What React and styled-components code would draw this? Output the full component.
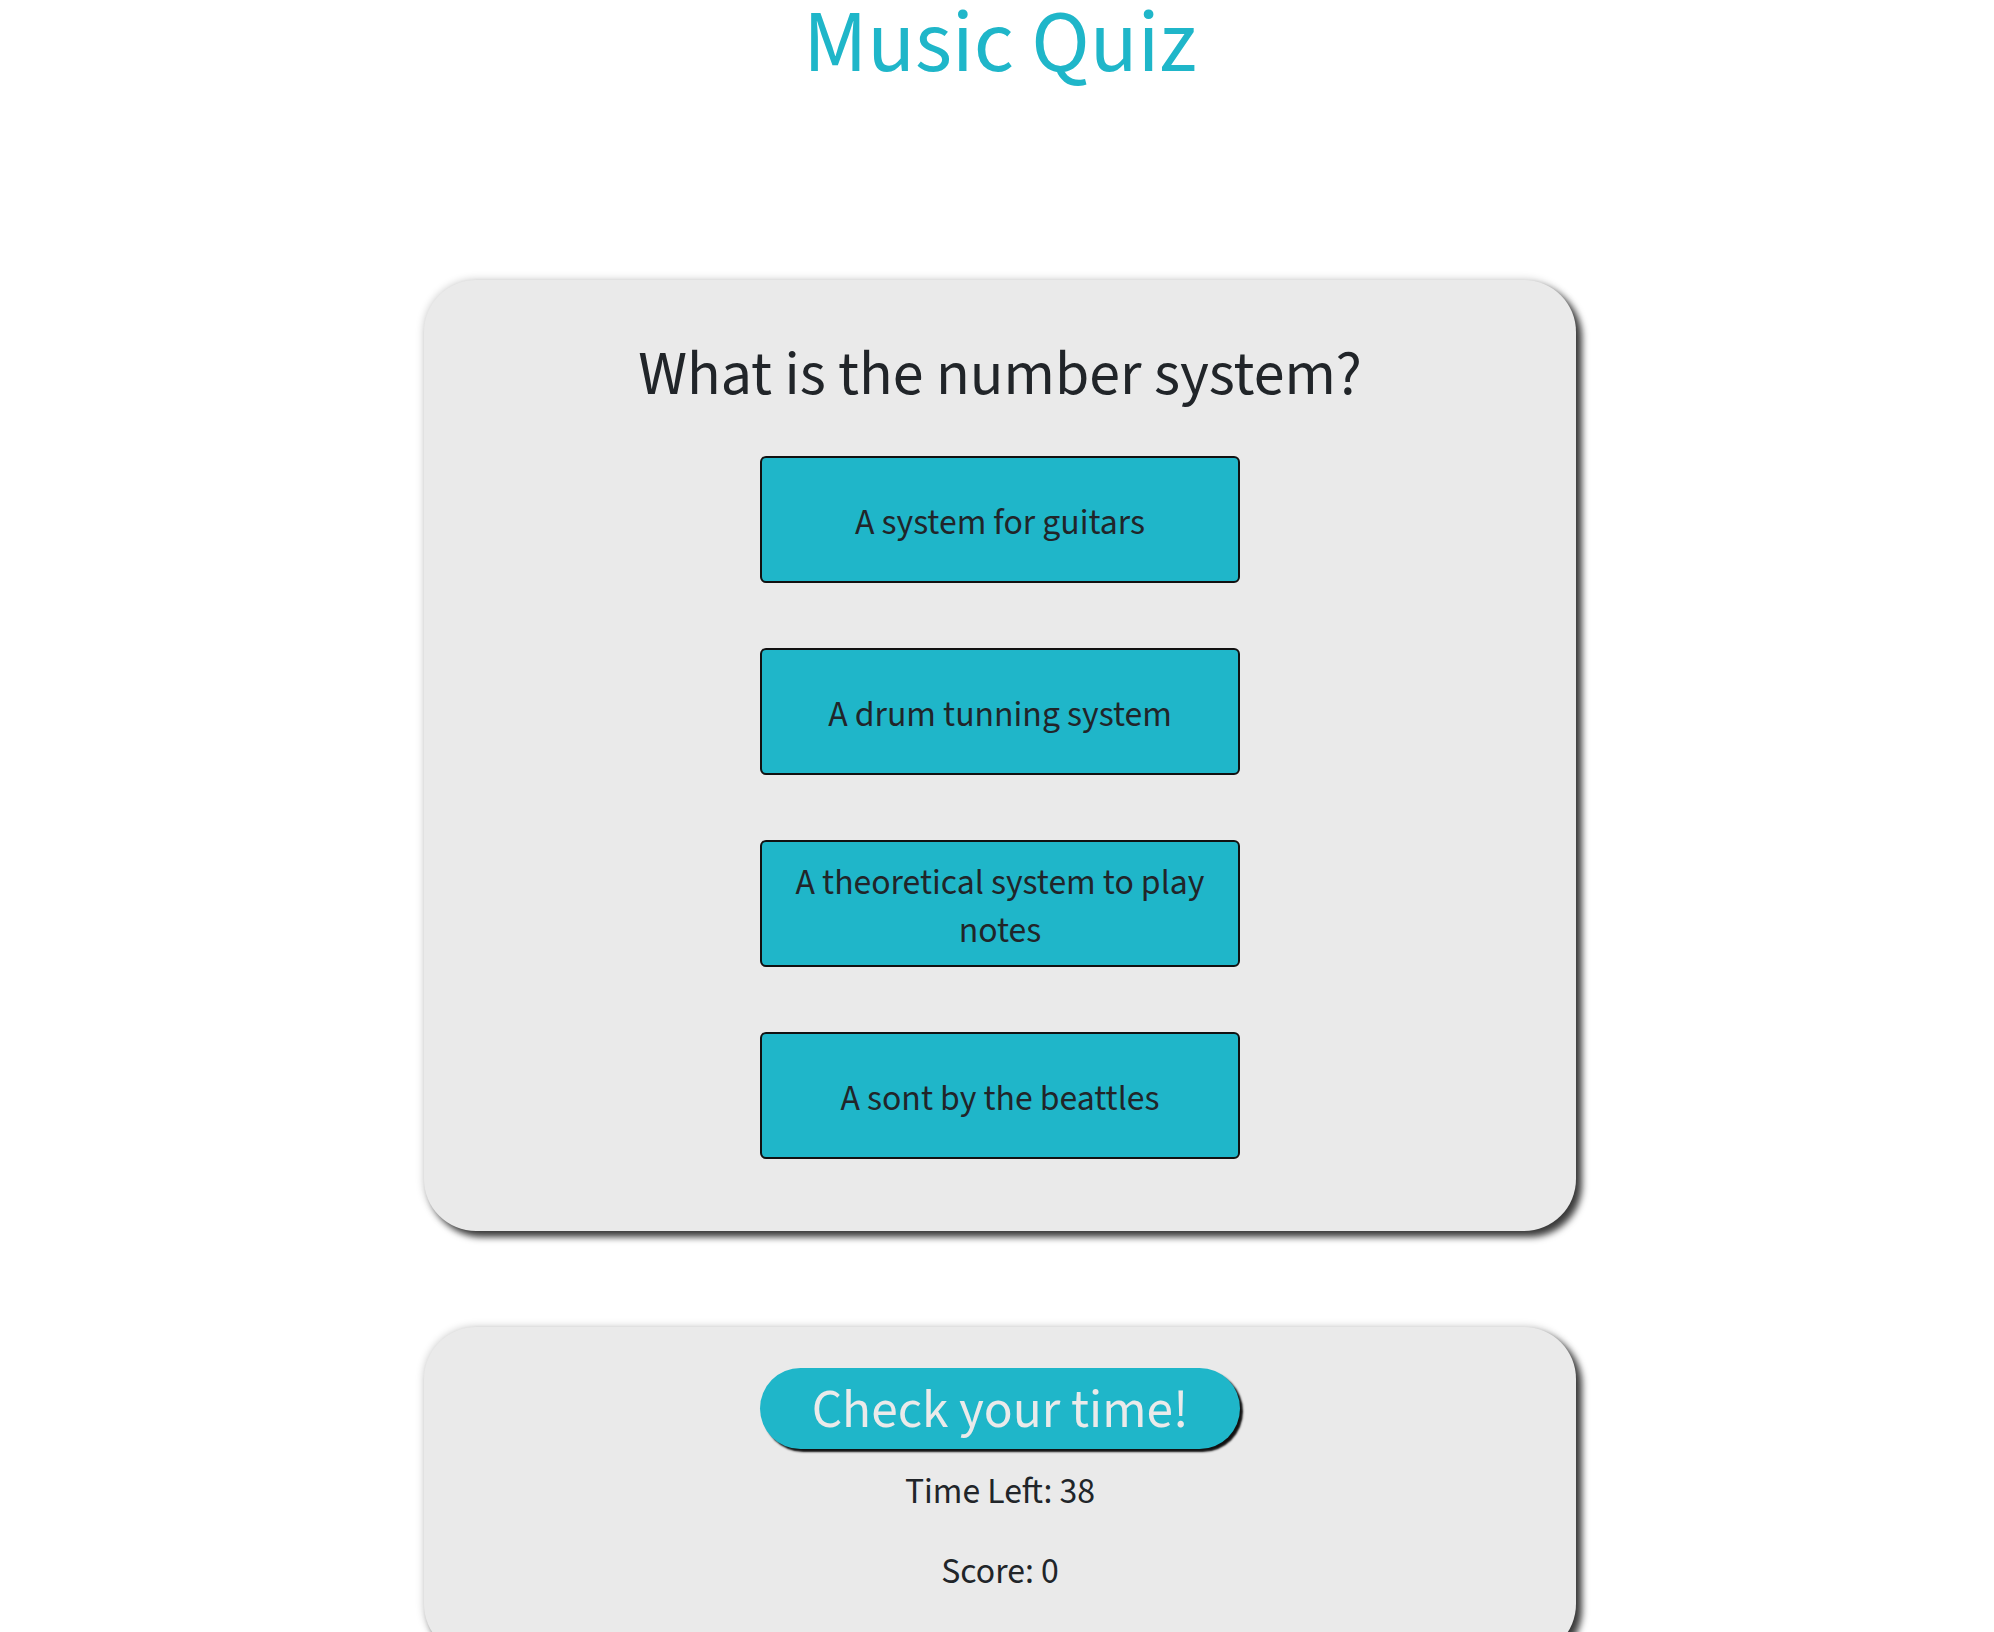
import React from "react";
import styled, { createGlobalStyle } from "styled-components";

const GlobalStyle = createGlobalStyle`
  html, body {
    margin: 0;
    padding: 0;
    background: #ffffff;
  }
  body {
    font-family: "Source Sans 3", Lato, "Liberation Sans", sans-serif;
    color: #212529;
  }
`;

const Page = styled.main`
  display: flex;
  flex-direction: column;
  align-items: center;
  padding-left: 6px;
`;

const Title = styled.h1`
  margin: 0;
  font-size: 88px;
  font-weight: 400;
  line-height: 1;
  color: #1fb6c9;
  text-align: center;
`;

const Card = styled.section`
  box-sizing: border-box;
  width: 1152px;
  margin-top: ${(p) => p.$top}px;
  padding: ${(p) => p.$pad};
  background: #eaeaea;
  border-radius: 52px;
  box-shadow: 0 0 8px rgba(0, 0, 0, 0.22), 6px 6px 7px rgba(0, 0, 0, 0.75);
  display: flex;
  flex-direction: column;
  align-items: center;
`;

const Question = styled.h2`
  margin: 0 0 44px;
  font-size: 62px;
  font-weight: 400;
  line-height: 1.2;
  text-align: center;
  color: #212529;
`;

const Answers = styled.div`
  display: flex;
  flex-direction: column;
  gap: 65px;
`;

const AnswerButton = styled.button`
  box-sizing: border-box;
  width: 480px;
  height: 127px;
  padding: 6px 24px 0;
  background: #1fb6c9;
  border: 2px solid #111;
  border-radius: 6px;
  font-family: inherit;
  font-size: 35.7px;
  line-height: 48px;
  color: #212529;
  text-align: center;
  cursor: pointer;
`;

const CheckButton = styled.button`
  box-sizing: border-box;
  width: 480px;
  height: 81px;
  padding: 4px 20px 0;
  background: #1fb6c9;
  border: none;
  border-radius: 41px;
  box-shadow: 3px 3px 2px #111;
  font-family: inherit;
  font-size: 53.4px;
  line-height: 1;
  color: #eaeaea;
  cursor: pointer;
`;

const Stat = styled.p`
  margin: ${(p) => p.$top}px 0 0;
  font-size: 35.7px;
  line-height: 48px;
  color: #212529;
`;

const answers = [
  "A system for guitars",
  "A drum tunning system",
  "A theoretical system to play notes",
  "A sont by the beattles",
];

export default function App() {
  return (
    <>
      <GlobalStyle />
      <Page>
        <Title>Music Quiz</Title>
        <Card $top={192} $pad="58px 0 72px">
          <Question>What is the number system?</Question>
          <Answers>
            {answers.map((a) => (
              <AnswerButton key={a}>{a}</AnswerButton>
            ))}
          </Answers>
        </Card>
        <Card $top={96} $pad="41px 0 60px">
          <CheckButton>Check your time!</CheckButton>
          <Stat $top={19}>Time Left: 38</Stat>
          <Stat $top={32}>Score: 0</Stat>
        </Card>
      </Page>
    </>
  );
}
